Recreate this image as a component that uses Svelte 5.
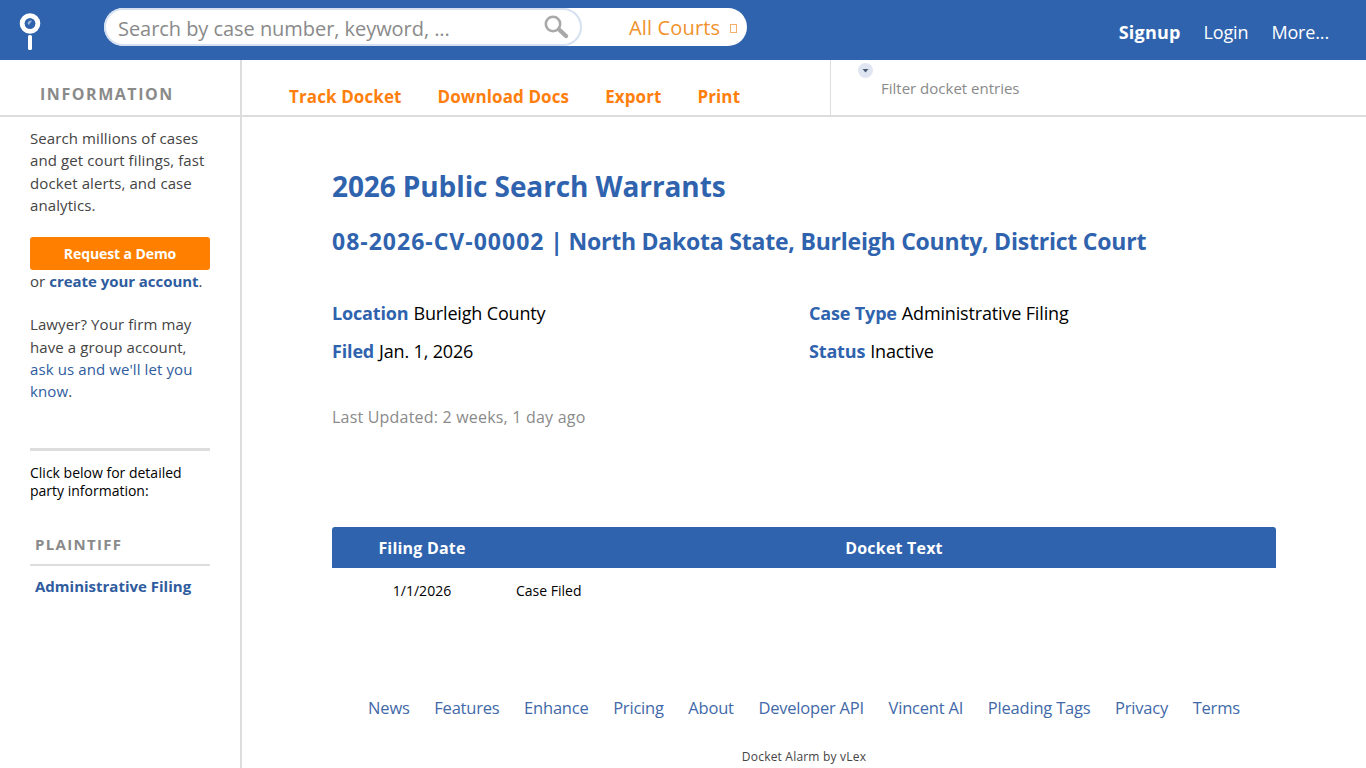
<script>
  const actions = ['Track Docket', 'Download Docs', 'Export', 'Print'];
  const footerLinks = ['News', 'Features', 'Enhance', 'Pricing', 'About', 'Developer API', 'Vincent AI', 'Pleading Tags', 'Privacy', 'Terms'];
</script>

<header class="topbar">
  <a class="logo" href="#top" aria-label="Docket Alarm">
    <svg width="22" height="40" viewBox="0 0 22 40">
      <circle cx="11" cy="12.5" r="7.8" fill="none" stroke="#fff" stroke-width="5" />
      <circle cx="11" cy="12.5" r="5.3" fill="#2f63ae" />
      <path d="M8.6 12.5 A3.2 3.2 0 0 1 13 9.8 L9.8 14Z" fill="#9db8dd" />
      <rect x="9" y="24" width="4" height="15" rx="1.6" fill="#fff" />
    </svg>
  </a>

  <form class="search">
    <div class="search-input">
      <span class="placeholder">Search by case number, keyword, ...</span>
      <svg class="glass" width="28" height="26" viewBox="0 0 28 26">
        <circle cx="11" cy="10" r="7.2" fill="none" stroke="#a9a9a9" stroke-width="2.6" />
        <path d="M17 15.5 L24 22" stroke="#a9a9a9" stroke-width="4.4" stroke-linecap="round" />
      </svg>
    </div>
    <div class="courts">All Courts <span class="tofu"></span></div>
  </form>

  <nav class="usernav">
    <a href="#top" class="strong">Signup</a>
    <a href="#top">Login</a>
    <a href="#top">More...</a>
  </nav>
</header>

<div class="page">
  <aside class="sidebar">
    <div class="info-head">INFORMATION</div>
    <div class="side-body">
      <p class="pitch">Search millions of cases and get court filings, fast docket alerts, and case analytics.</p>
      <a class="demo" href="#top">Request a Demo</a>
      <p class="or">or <a href="#top" class="bold-link">create your account</a>.</p>
      <p class="lawyer">Lawyer? Your firm may have a group account, <a href="#top">ask us and we'll let you know</a>.</p>
      <hr />
      <p class="below">Click below for detailed party information:</p>
      <div class="party-head">PLAINTIFF</div>
      <a class="party" href="#top">Administrative Filing</a>
    </div>
  </aside>

  <div class="content">
    <div class="toolbar">
      <div class="actions">
        {#each actions as action}
          <a href="#top">{action}</a>
        {/each}
      </div>
      <div class="filter">
        <span class="filter-toggle">
          <svg width="15" height="15" viewBox="0 0 15 15">
            <circle cx="7.5" cy="7.5" r="7.5" fill="#dfe6f2" />
            <path d="M4.5 6 H10.5 L7.5 9.5Z" fill="#4a5a75" />
          </svg>
        </span>
        <span class="filter-text">Filter docket entries</span>
      </div>
    </div>

    <main class="main">
      <h1>2026 Public Search Warrants</h1>
      <h2><span class="case-no">08-2026-CV-00002</span> | North Dakota State, Burleigh County, District Court</h2>

      <dl class="meta">
        <div><dt>Location</dt> <dd>Burleigh County</dd></div>
        <div><dt>Case Type</dt> <dd>Administrative Filing</dd></div>
        <div><dt>Filed</dt> <dd>Jan. 1, 2026</dd></div>
        <div><dt>Status</dt> <dd>Inactive</dd></div>
      </dl>

      <p class="updated">Last Updated: 2 weeks, 1 day ago</p>

      <table class="docket">
        <thead>
          <tr><th class="date">Filing Date</th><th>Docket Text</th></tr>
        </thead>
        <tbody>
          <tr><td class="date">1/1/2026</td><td class="text">Case Filed</td></tr>
        </tbody>
      </table>

      <footer class="foot">
        <div class="foot-links">
          {#each footerLinks as link}
            <a href="#top">{link}</a>
          {/each}
        </div>
        <div class="byline">Docket Alarm by vLex</div>
      </footer>
    </main>
  </div>
</div>

<style>
  :global(body) {
    margin: 0;
    font-family: "Open Sans", "Noto Sans", sans-serif;
    background: #fff;
    color: #444;
    overflow: hidden;
  }

  a {
    text-decoration: none;
  }

  .topbar {
    height: 60px;
    background: #2f63ae;
    display: flex;
    align-items: center;
    box-sizing: border-box;
    padding-left: 19px;
  }

  .logo {
    display: flex;
    width: 85px;
    height: 40px;
    margin-top: 1px;
  }

  .search {
    display: flex;
    width: 643px;
    height: 38px;
    margin-top: -7px;
    background: #fff;
    border-radius: 19px;
    overflow: hidden;
  }

  .search-input {
    width: 478px;
    box-sizing: border-box;
    border: 2px solid #d5e1f0;
    border-radius: 19px;
    display: flex;
    align-items: center;
    justify-content: space-between;
    padding: 0 10px 0 12px;
  }

  .placeholder {
    padding-top: 3px;
    font-size: 20px;
    letter-spacing: -0.05px;
    color: #8a8a8a;
    white-space: nowrap;
  }

  .courts {
    flex: 1;
    display: flex;
    align-items: center;
    padding: 2px 0 0 47px;
    font-size: 20px;
    letter-spacing: 0.15px;
    color: #f0922b;
    white-space: nowrap;
  }

  .tofu {
    display: inline-block;
    width: 5px;
    height: 7px;
    border: 1px solid #f3b06c;
    margin-left: 10px;
    margin-top: 1px;
  }

  .usernav {
    margin-left: auto;
    display: flex;
    gap: 23px;
    padding-right: 37px;
    margin-top: 4px;
    font-size: 18px;
    letter-spacing: -0.15px;
  }

  .usernav a {
    color: #fff;
  }

  .usernav .strong {
    font-weight: 700;
    letter-spacing: 0.2px;
  }

  .page {
    display: flex;
    height: 708px;
  }

  .sidebar {
    width: 242px;
    flex: none;
    box-sizing: border-box;
    border-right: 2px solid #ddd;
  }

  .info-head {
    height: 57px;
    box-sizing: border-box;
    border-bottom: 2px solid #ddd;
    padding: 23px 0 0 40px;
    font-size: 16px;
    line-height: 22px;
    font-weight: 700;
    letter-spacing: 1.55px;
    color: #8a8a8a;
  }

  .side-body {
    padding: 10px 30px 0;
    font-size: 15px;
    line-height: 22.3px;
    letter-spacing: 0.1px;
    color: #444;
  }

  .side-body p {
    margin: 0;
  }

  .demo {
    display: block;
    margin-top: 21px;
    height: 33px;
    line-height: 33px;
    background: #ff8000;
    border-radius: 3px;
    color: #fff;
    text-align: center;
    font-size: 14px;
    font-weight: 700;
    letter-spacing: -0.1px;
  }

  .bold-link {
    color: #2f5c9e;
    font-weight: 700;
    letter-spacing: -0.05px;
  }

  .lawyer {
    padding-top: 21px;
  }

  .lawyer a {
    color: #2f5c9e;
  }

  hr {
    border: 0;
    border-top: 3px solid #ddd;
    margin: 45px 0 0;
  }

  .side-body .below {
    margin-top: 13px;
    font-size: 14px;
    line-height: 18px;
    letter-spacing: 0;
    color: #000;
  }

  .party-head {
    margin-top: 34px;
    padding: 0 0 10px 5px;
    border-bottom: 2px solid #ddd;
    font-size: 15px;
    line-height: 20px;
    font-weight: 700;
    letter-spacing: 1.3px;
    color: #8a8a8a;
  }

  .party {
    display: block;
    margin-top: 9px;
    padding-left: 5px;
    font-size: 15px;
    line-height: 22px;
    font-weight: 700;
    letter-spacing: 0;
    color: #2f5c9e;
  }

  .content {
    flex: 1;
    min-width: 0;
  }

  .toolbar {
    height: 57px;
    box-sizing: border-box;
    border-bottom: 2px solid #ddd;
    display: flex;
  }

  .actions {
    width: 589px;
    flex: none;
    box-sizing: border-box;
    padding: 25px 0 0 47px;
    display: flex;
    gap: 36px;
    border-right: 1px solid #ddd;
  }

  .actions a {
    font-size: 17px;
    line-height: 24px;
    font-weight: 700;
    letter-spacing: 0.1px;
    color: #ff7f0e;
  }

  .filter {
    position: relative;
    padding: 17px 0 0 50px;
  }

  .filter-toggle {
    position: absolute;
    left: 27px;
    top: 3px;
    display: flex;
  }

  .filter-text {
    font-size: 15px;
    line-height: 22px;
    letter-spacing: 0;
    color: #8a8a8a;
  }

  .main {
    padding: 0 90px 0 90px;
  }

  h1 {
    margin: 50px 0 0;
    font-size: 28px;
    line-height: 38px;
    font-weight: 700;
    letter-spacing: -0.1px;
    color: #2f63ae;
  }

  h2 {
    margin: 20px 0 0;
    font-size: 23px;
    line-height: 32px;
    font-weight: 700;
    letter-spacing: -0.22px;
    color: #2f63ae;
  }

  .case-no {
    letter-spacing: 1px;
  }

  .meta {
    margin: 43px 0 0;
    display: grid;
    grid-template-columns: 477px 1fr;
    row-gap: 12px;
    font-size: 18px;
    line-height: 26px;
    letter-spacing: -0.16px;
  }

  .meta div {
    display: flex;
    gap: 5px;
  }

  dt {
    font-weight: 700;
    color: #2f63ae;
  }

  dd {
    margin: 0;
    color: #000;
  }

  .updated {
    margin: 41px 0 0;
    font-size: 16px;
    line-height: 24px;
    letter-spacing: 0.2px;
    color: #8a8a8a;
  }

  .docket {
    margin-top: 98px;
    width: 944px;
    border-collapse: collapse;
    color: #000;
  }

  .docket th {
    height: 41px;
    padding: 0;
    background: #2f63ae;
    color: #fff;
    font-size: 16px;
    font-weight: 700;
    letter-spacing: 0.2px;
    text-align: center;
  }

  .docket th:first-child {
    border-radius: 3px 0 0 0;
  }

  .docket th:last-child {
    border-radius: 0 3px 0 0;
  }

  .docket .date {
    width: 180px;
  }

  .docket td {
    height: 45px;
    padding: 0;
    font-size: 14px;
    letter-spacing: 0;
  }

  .docket td.date {
    text-align: center;
  }

  .docket td.text {
    padding-left: 4px;
  }

  .foot {
    margin-top: 83px;
    text-align: center;
  }

  .foot-links {
    display: flex;
    justify-content: center;
    gap: 24.6px;
    font-size: 16.5px;
    line-height: 24px;
    letter-spacing: -0.2px;
  }

  .foot-links a {
    color: #3f69a8;
  }

  .byline {
    margin-top: 28px;
    font-size: 12px;
    line-height: 18px;
    letter-spacing: 0.2px;
    color: #444;
  }
</style>
